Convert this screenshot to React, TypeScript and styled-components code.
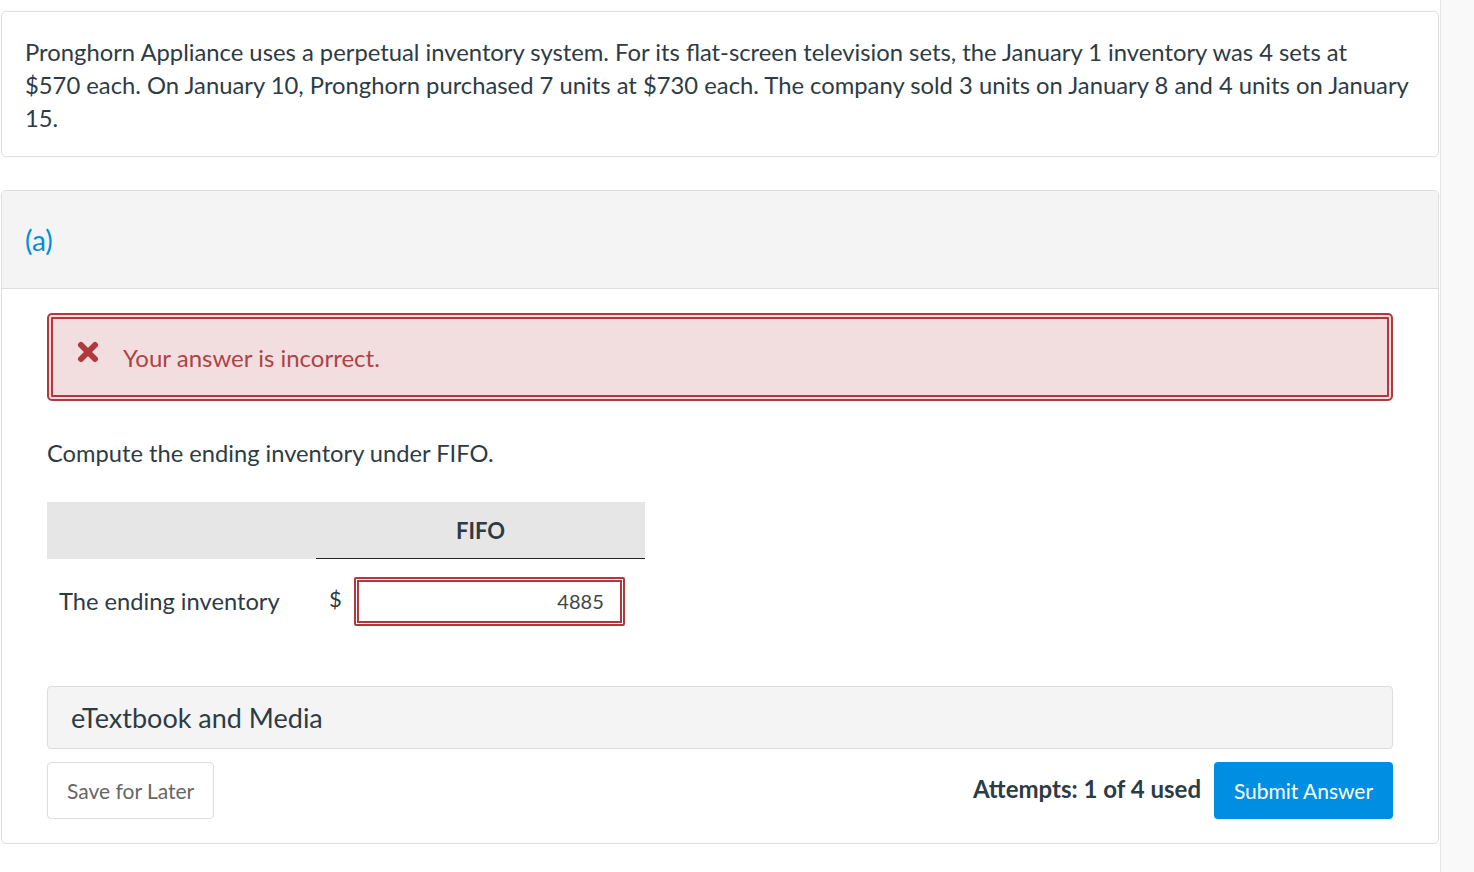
import React from 'react';
import styled, { createGlobalStyle } from 'styled-components';

const Global = createGlobalStyle`
  html, body {
    margin: 0;
    padding: 0;
    background: #fff;
    font-family: Lato, "Open Sans", sans-serif;
    color: #2d3b45;
  }
`;

const Page = styled.div`
  display: flex;
  min-height: 872px;
`;

const Main = styled.div`
  width: 1440px;
  padding: 11px 0 0 1px;
  box-sizing: border-box;
  display: flex;
  flex-direction: column;
  gap: 33px;
`;

const Aside = styled.div`
  flex: 1;
  background: #f9f9f9;
  border-left: 1px solid #e8e8e8;
`;

const Card = styled.div`
  width: 1438px;
  box-sizing: border-box;
  border: 1px solid #dddddd;
  border-radius: 5px;
  background: #fff;
  overflow: hidden;
`;

const Question = styled.p`
  margin: 0;
  padding: 24px 10px 21px 23px;
  font-size: 23.8px;
  line-height: 33px;
  white-space: nowrap;
`;

const PartHeader = styled.div`
  height: 97px;
  background: #f4f4f4;
  border-bottom: 1px solid #dddddd;
  display: flex;
  align-items: center;
  padding-left: 23px;
  font-size: 28px;
  color: #008ee2;
`;

const Body = styled.div`
  padding: 24px 45px 24px 45px;
`;

const Alert = styled.div`
  height: 88px;
  box-sizing: border-box;
  border: 6px double #b1393d;
  border-radius: 5px;
  background: #f2dede;
  display: flex;
  align-items: center;
  gap: 24px;
  padding-left: 24px;
  color: #ad4346;
  font-size: 24px;
`;

const Prompt = styled.p`
  margin: 37px 0 34px 0;
  font-size: 23.7px;
  line-height: 30px;
`;

const Table = styled.div`
  display: grid;
  grid-template-columns: 269px 329px;
`;

const HeadCell = styled.div<{ $rule?: boolean }>`
  height: 57px;
  background: #e6e6e6;
  border-bottom: 1px solid ${(p) => (p.$rule ? '#222' : '#e6e6e6')};
  box-sizing: border-box;
  display: flex;
  align-items: center;
  justify-content: center;
  font-weight: 700;
  font-size: 22px;
`;

const Label = styled.div`
  display: flex;
  align-items: center;
  padding-left: 12px;
  height: 84px;
  font-size: 23.7px;
`;

const InputCell = styled.div`
  display: flex;
  align-items: center;
  gap: 12px;
  padding-left: 13px;
  font-size: 22px;
`;

const Dollar = styled.span`
  margin-top: -6px;
`;

const Field = styled.div`
  width: 271px;
  height: 49px;
  box-sizing: border-box;
  border: 5px double #b1393d;
  border-radius: 2px;
  display: flex;
  align-items: center;
  justify-content: flex-end;
  padding-right: 16px;
  font-size: 20px;
  color: #444;
`;

const Media = styled.div`
  margin-top: 43px;
  height: 63px;
  box-sizing: border-box;
  border: 1px solid #dddddd;
  border-radius: 4px;
  background: #f4f4f4;
  display: flex;
  align-items: center;
  padding-left: 23px;
  font-size: 27px;
`;

const Footer = styled.div`
  margin-top: 13px;
  display: flex;
  align-items: center;
`;

const SaveButton = styled.button`
  height: 57px;
  padding: 0 19px;
  border: 1px solid #dddddd;
  border-radius: 4px;
  background: #fff;
  font-family: inherit;
  font-size: 21px;
  color: #666;
`;

const Attempts = styled.span`
  margin-left: auto;
  margin-right: 13px;
  margin-top: -4px;
  font-weight: 700;
  font-size: 24px;
`;

const SubmitButton = styled.button`
  height: 57px;
  width: 179px;
  border: none;
  border-radius: 4px;
  background: #008ee2;
  color: #fff;
  font-family: inherit;
  font-size: 21px;
`;

const CrossIcon = () => (
  <svg width="22" height="22" viewBox="0 0 22 22" style={{ marginTop: -10 }}>
    <path d="M4 4 L18 18 M18 4 L4 18" stroke="#b1393d" strokeWidth="6" strokeLinecap="round" />
  </svg>
);

export default function App() {
  return (
    <Page>
      <Global />
      <Main>
        <Card>
          <Question>
            Pronghorn Appliance uses a perpetual inventory system. For its flat-screen television sets, the January 1 inventory was 4 sets at
            <br />
            $570 each. On January 10, Pronghorn purchased 7 units at $730 each. The company sold 3 units on January 8 and 4 units on January
            <br />
            15.
          </Question>
        </Card>
        <Card>
          <PartHeader>(a)</PartHeader>
          <Body>
            <Alert>
              <CrossIcon />
              <span>Your answer is incorrect.</span>
            </Alert>
            <Prompt>Compute the ending inventory under FIFO.</Prompt>
            <Table>
              <HeadCell />
              <HeadCell $rule>FIFO</HeadCell>
              <Label>The ending inventory</Label>
              <InputCell>
                <Dollar>$</Dollar>
                <Field>4885</Field>
              </InputCell>
            </Table>
            <Media>eTextbook and Media</Media>
            <Footer>
              <SaveButton>Save for Later</SaveButton>
              <Attempts>Attempts: 1 of 4 used</Attempts>
              <SubmitButton>Submit Answer</SubmitButton>
            </Footer>
          </Body>
        </Card>
      </Main>
      <Aside />
    </Page>
  );
}
